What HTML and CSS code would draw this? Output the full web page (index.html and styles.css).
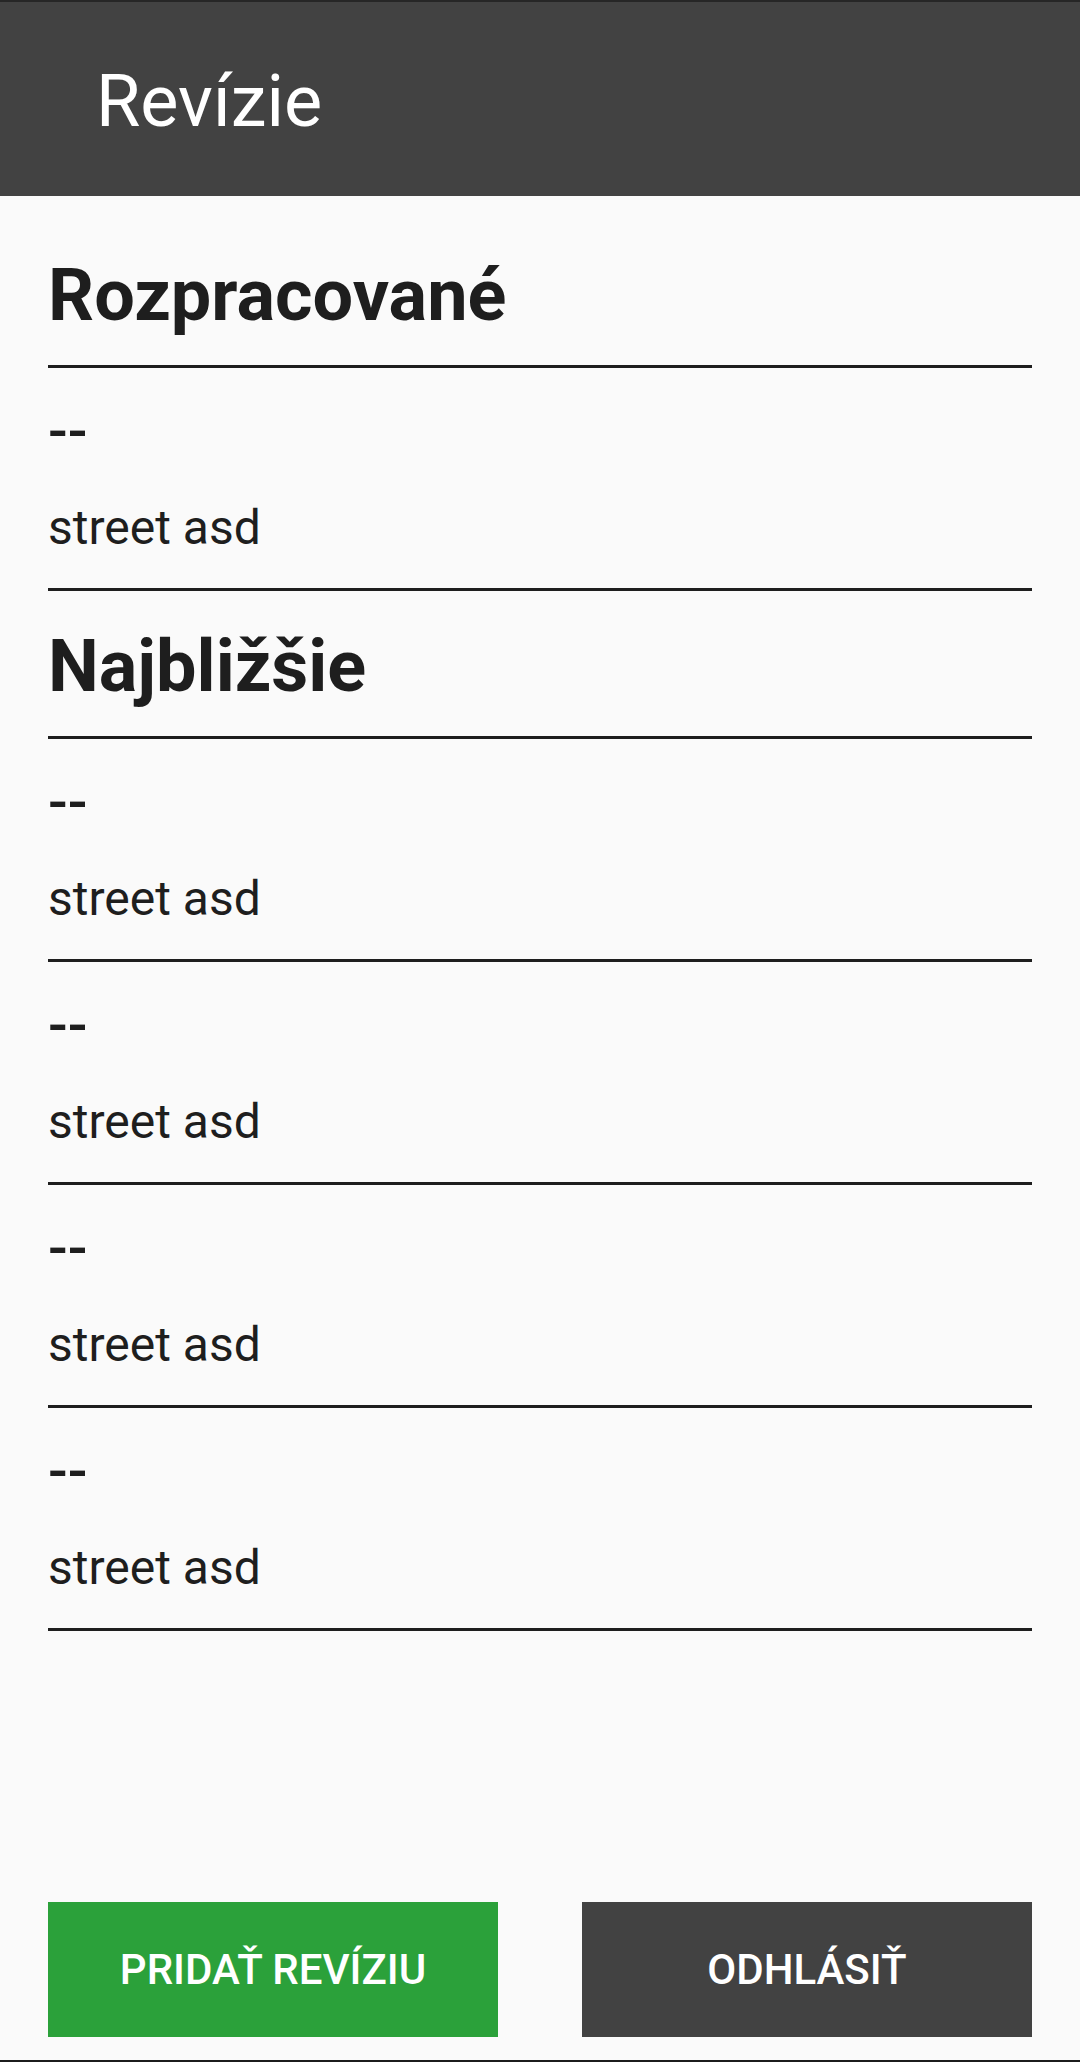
FILE: index.html
```html
<!DOCTYPE html>
<html lang="sk">
<head>
    <meta charset="UTF-8">
    <meta name="viewport" content="width=device-width, initial-scale=1.0">
    <title>Revízie</title>
    <link rel="stylesheet" href="styles.css">
</head>
<body>
    <div class="page">
        <header class="toolbar">
            <h1 class="toolbar-title">Revízie</h1>
        </header>

        <main class="content">
            <h2 class="section-title first">Rozpracované</h2>
            <div class="divider"></div>
            <div class="item">
                <div class="item-date">--</div>
                <div class="item-street">street asd</div>
            </div>
            <div class="divider"></div>

            <h2 class="section-title">Najbližšie</h2>
            <div class="divider"></div>
            <div class="item">
                <div class="item-date">--</div>
                <div class="item-street">street asd</div>
            </div>
            <div class="divider"></div>
            <div class="item">
                <div class="item-date">--</div>
                <div class="item-street">street asd</div>
            </div>
            <div class="divider"></div>
            <div class="item">
                <div class="item-date">--</div>
                <div class="item-street">street asd</div>
            </div>
            <div class="divider"></div>
            <div class="item">
                <div class="item-date">--</div>
                <div class="item-street">street asd</div>
            </div>
            <div class="divider"></div>
        </main>

        <footer class="actions">
            <button class="btn btn-add">Pridať revíziu</button>
            <button class="btn btn-logout">Odhlásiť</button>
        </footer>
    </div>
</body>
</html>
```

FILE: styles.css
```css
html, body {
    margin: 0;
    padding: 0;
}

body {
    background-color: #fafafa;
    color: #1e1e1e;
    font-family: Roboto, "Noto Sans", sans-serif;
}

.page {
    min-height: 100vh;
    box-sizing: border-box;
    display: flex;
    flex-direction: column;
    border-top: 2px solid #262626;
    border-bottom: 2px solid #1c1c1c;
}

.toolbar {
    height: 194px;
    box-sizing: border-box;
    padding: 58px 0 0 96px;
    background-color: #424242;
}

.toolbar-title {
    margin: 0;
    font-size: 72px;
    line-height: 84px;
    font-weight: 400;
    color: #ffffff;
}

.content {
    flex: 1;
    padding: 0 48px;
}

.section-title {
    margin: 32px 0 25px;
    font-size: 72px;
    line-height: 88px;
    font-weight: 700;
}

.section-title.first {
    margin-top: 56px;
}

.divider {
    height: 3px;
    background-color: #1e1e1e;
}

.item {
    padding: 21px 0 32px;
}

.item-date {
    font-size: 58px;
    line-height: 84px;
    font-weight: 500;
}

.item-street {
    margin-top: 27px;
    font-size: 48px;
    line-height: 56px;
}

.actions {
    display: flex;
    gap: 84px;
    padding: 0 48px 23px;
}

.btn {
    flex: 1;
    height: 135px;
    border: none;
    color: #ffffff;
    font-family: Roboto, "Noto Sans", sans-serif;
    font-size: 42px;
    font-weight: 500;
    text-transform: uppercase;
    cursor: pointer;
}

.btn-add {
    background-color: #2ba13a;
}

.btn-logout {
    background-color: #424242;
}
```
